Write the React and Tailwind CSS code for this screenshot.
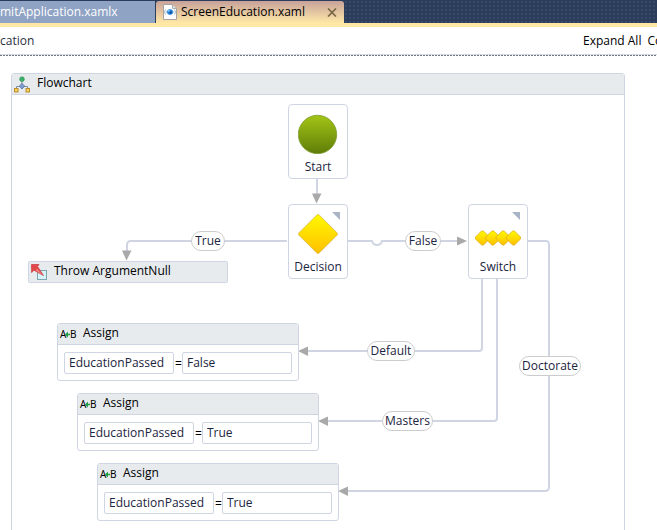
import React from "react";

function FileIcon() {
  return (
    <svg width="14" height="16" viewBox="0 0 14 16" aria-hidden="true">
      <path d="M0.5 0.5H9.5L13.5 4.500V15.5H0.5Z" fill="#fdfdfd" stroke="#a9a3a0" />
      <path d="M9.5 0.5V4.500H13.5" fill="#dfe3e8" stroke="#9c9c9c" strokeWidth="0.8" />
      <path d="M2.500 5.500Q0.500 8 2.500 10.500M11.500 5.500Q13.500 8 11.500 10.500" fill="none" stroke="#a9bccb" strokeWidth="1" />
      <path d="M3 8Q7 3.5 11 8Q7 12.5 3 8Z" fill="#cfe6f8" stroke="#a3c3dd" strokeWidth="0.8" />
      <circle cx="7" cy="8" r="2.8" fill="#2385dc" />
      <circle cx="7.8" cy="8.5" r="1.3" fill="#0b4fa8" />
      <circle cx="5.9" cy="6.9" r="0.8" fill="#a8dcff" />
    </svg>
  );
}

function FlowchartIcon() {
  return (
    <svg width="16" height="17" viewBox="0 0 16 17" aria-hidden="true">
      <path d="M8 4V10M6 10.500H2.5V12M10 10.500H13.5V12" fill="none" stroke="#7f8ea3" strokeWidth="1" />
      <circle cx="8" cy="3.200" r="2.4" fill="#3bb169" stroke="#2c8b50" strokeWidth="0.5" />
      <path d="M8 7.400L10.800 10.200L8 13L5.200 10.200Z" fill="#7f9cd0" stroke="#48659c" strokeWidth="0.7" />
      <rect x="0.5" y="12.5" width="3.500" height="3.500" fill="#f6d25a" stroke="#bd8d2e" />
      <rect x="12" y="12.5" width="3.500" height="3.500" fill="#f6d25a" stroke="#bd8d2e" />
    </svg>
  );
}

function ThrowIcon() {
  return (
    <svg width="16" height="16" viewBox="0 0 16 16" aria-hidden="true">
      <rect x="6.5" y="6.5" width="9" height="9" fill="#d5f3f8" stroke="#7fa6ad" />
      <path d="M0.500 0.500H8L6.500 2.400L12.500 11.500L3 6.200L0.600 8.500Z" fill="#e04a4a" stroke="#d04046" strokeWidth="0.8" />
      <path d="M6 4.800L11.800 10.900L5 6.600Z" fill="#f58a86" />
    </svg>
  );
}

function AssignIcon() {
  return (
    <span className="flex w-4 items-center justify-between font-['Noto_Sans',sans-serif] text-[10px] leading-4 text-black" aria-hidden="true">
      <span className="w-[5px]">A</span>
      <svg className="z-10 shrink-0" width="5" height="7" viewBox="0 0 5 7">
        <path d="M0 3.5L3 0.5V2.8H5V4.2H3V6.5Z" fill="#22a045" />
      </svg>
      <span className="w-[6px]">B</span>
    </span>
  );
}

function Corner() {
  return (
    <svg className="absolute right-[7px] top-[7px]" width="8" height="8" viewBox="0 0 8 8" aria-hidden="true">
      <path d="M0 0H8V8Z" fill="#a9b5c5" />
    </svg>
  );
}

function ShapeNode({ label, place, corner, children }) {
  return (
    <div className={`absolute flex h-[75px] w-[60px] flex-col items-center rounded-[4px] border border-[#cfd5e3] bg-white ${place}`}>
      {corner && <Corner />}
      <div className="flex h-[54px] items-end justify-center pb-[5px]">{children}</div>
      <span className="leading-4 text-[#1b2440]">{label}</span>
    </div>
  );
}

function AssignNode({ value, place, id }) {
  const field = "h-[22px] w-[110px] rounded-[2px] border border-[#cfd5e3] bg-white px-1 pb-px text-[#1b2440] outline-none";
  return (
    <section className={`absolute w-[242px] rounded-[3px] border border-[#cfd5e3] bg-white ${place}`}>
      <header className="flex h-[21px] items-center gap-[7px] border-b border-[#cfd5e3] bg-[#e7ebee] pl-[2px] text-black">
        <AssignIcon />
        <h2 className="pb-[2px] leading-4">Assign</h2>
      </header>
      <div className="flex items-center gap-px px-[6px] pb-[6px] pt-[7px]">
        <input id={`${id}-to`} aria-label="To" className={field} defaultValue="EducationPassed" />
        <span className="w-[6px] pt-[2px] text-center leading-4 text-black">=</span>
        <input id={`${id}-value`} aria-label="Value" className={field} defaultValue={value} />
      </div>
    </section>
  );
}

function Branch({ children, place }) {
  return (
    <span className={`absolute flex h-5 items-center justify-center rounded-full border border-[#cccccc] bg-white leading-4 text-[#1b2440] ${place}`}>
      {children}
    </span>
  );
}

function Connectors() {
  return (
    <svg className="absolute left-0 top-0" width="612" height="440" viewBox="12 95 612 440" aria-hidden="true">
      <g fill="none" stroke="#cfd5e3" strokeWidth="2">
        <path d="M317 179V195" />
        <path d="M287 241H131Q127 241 127 245V251" />
        <path d="M348 241H372Q373 245 377 245Q381 245 382 241H458" />
        <path d="M482 279V348Q482 351 479 351H307" />
        <path d="M497 279V418Q497 421 494 421H327" />
        <path d="M528 241H546Q549 241 549 245V487Q549 491 545 491H347" />
      </g>
      <g fill="#a9a9a9">
        <path d="M312 193.500H321.500L316.500 203.500Z" />
        <path d="M122 250.500H131.500L126.500 260.500Z" />
        <path d="M457 236.500V245.500L467 241Z" />
        <path d="M308 346.500V356L298 351Z" />
        <path d="M328 416.500V426L318 421Z" />
        <path d="M348 486.500V496L338 491Z" />
      </g>
    </svg>
  );
}

export default function App() {
  return (
    <div className="flex h-screen flex-col overflow-hidden bg-white font-['Open_Sans','Noto_Sans',sans-serif] text-[12px] text-black">
      <nav className="flex h-[27px] shrink-0 gap-px border-b-4 border-[#ffe8a6] bg-[#2c3d5b] bg-[radial-gradient(#384a69_1px,transparent_1px)] bg-size-[4px_4px] pt-px">
        <button className="w-[155px] overflow-hidden whitespace-nowrap bg-[#8fa3c5] text-left leading-[22px] text-white">
          mitApplication.xamlx
        </button>
        <div className="flex w-[188px] items-center rounded-t-[3px] bg-linear-to-b from-[#c8a29a] to-[#ffe8a6] pl-[7px] pr-[7px]">
          <button className="flex flex-1 items-center gap-1 whitespace-nowrap leading-[22px]">
            <FileIcon />
            ScreenEducation.xaml
          </button>
          <button aria-label="Close">
            <svg width="10" height="9" viewBox="0 0 10 9" aria-hidden="true">
              <path d="M1 0.500L9 8.500M9 0.500L1 8.500" stroke="#7b6845" strokeWidth="1.7" />
            </svg>
          </button>
        </div>
      </nav>

      <div className="shrink-0">
        <div className="flex h-[28px] items-center justify-between overflow-hidden border-b border-[#d5dae6]">
          <span className="pt-px text-[#2a2f42]">cation</span>
          <div className="flex w-[74px] gap-[6px] whitespace-nowrap">
            <button>Expand All</button>
            <button>Collapse All</button>
          </div>
        </div>
        <div className="h-px bg-[repeating-linear-gradient(90deg,#6f7582_0_2px,#ffffff_2px_3px)]" />
      </div>

      <main className="min-h-0 flex-1 overflow-hidden pl-[11px] pr-8 pt-[17px]">
        <section className="flex h-[600px] flex-col rounded-[3px] border border-[#cfd5e3] bg-white">
          <header className="flex h-[21px] shrink-0 items-center gap-[7px] border-b border-[#cfd5e3] bg-[#e7ebee] pl-[2px]">
            <FlowchartIcon />
            <h1 className="pb-[2px] leading-4">Flowchart</h1>
          </header>
          <div className="relative flex-1">
            <Connectors />
            <ShapeNode label="Start" place="left-[276px] top-[9px]">
              <svg width="40" height="40" viewBox="0 0 40 40" aria-hidden="true">
                <defs>
                  <linearGradient id="green" x1="0" y1="0" x2="0" y2="1">
                    <stop offset="0" stopColor="#a3c516" />
                    <stop offset="1" stopColor="#5f7d08" />
                  </linearGradient>
                </defs>
                <circle cx="19.500" cy="20.500" r="19.200" fill="url(#green)" stroke="#7d9a2c" strokeWidth="0.8" />
              </svg>
            </ShapeNode>
            <ShapeNode label="Decision" place="left-[276px] top-[109px]" corner>
              <svg width="40" height="40" viewBox="0 0 40 40" aria-hidden="true">
                <defs>
                  <linearGradient id="yellow" x1="0" y1="0" x2="0" y2="1">
                    <stop offset="0" stopColor="#fff900" />
                    <stop offset="1" stopColor="#ffbf00" />
                  </linearGradient>
                </defs>
                <path d="M18.800 1Q20 0 21.200 1L39 18.800Q40 20 39 21.200L21.200 39Q20 40 18.800 39L1 21.200Q0 20 1 18.800Z" fill="url(#yellow)" stroke="#d9b84a" strokeWidth="0.8" />
              </svg>
            </ShapeNode>
            <ShapeNode label="Switch" place="left-[456px] top-[109px]" corner>
              <svg className="mb-2" width="46" height="16" viewBox="0 0 46 16" aria-hidden="true">
                {[7.5, 17.800, 28.200, 38.500].map((x) => (
                  <path
                    key={x}
                    transform={`translate(${x} 8)`}
                    d="M-1.200 -6.800Q0 -7.500 1.200 -6.800L7 -1Q7.600 0 7 1L1.200 6.800Q0 7.500 -1.200 6.800L-7 1Q-7.600 0 -7 -1Z"
                    fill="url(#yellow)"
                    stroke="#dfad22"
                    strokeWidth="0.8"
                  />
                ))}
              </svg>
            </ShapeNode>

            <section className="absolute left-[16px] top-[166px] flex h-[22px] w-[200px] items-center gap-[7px] rounded-[2px] border border-[#cfd5e3] bg-[#e7ebee] pl-[2px]">
              <ThrowIcon />
              <h2 className="pb-[2px] leading-4">Throw ArgumentNull</h2>
            </section>

            <AssignNode id="default" value="False" place="left-[45px] top-[228px]" />
            <AssignNode id="masters" value="True" place="left-[65px] top-[298px]" />
            <AssignNode id="doctorate" value="True" place="left-[85px] top-[368px]" />

            <Branch place="left-[179px] top-[136px] w-[34px]">True</Branch>
            <Branch place="left-[393px] top-[136px] w-[36px]">False</Branch>
            <Branch place="left-[355px] top-[246px] w-[48px]">Default</Branch>
            <Branch place="left-[370px] top-[316px] w-[51px]">Masters</Branch>
            <Branch place="left-[507px] top-[261px] w-[62px]">Doctorate</Branch>
          </div>
        </section>
      </main>
    </div>
  );
}
